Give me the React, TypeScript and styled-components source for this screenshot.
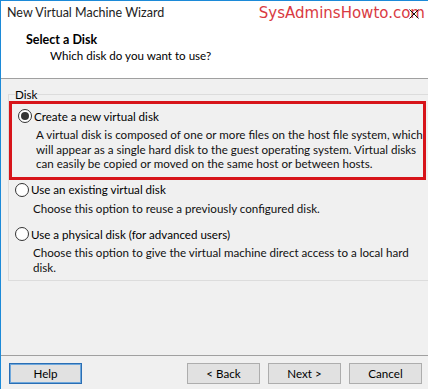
import React from "react";
import styled, { createGlobalStyle } from "styled-components";

const Global = createGlobalStyle`
  html, body { margin: 0; padding: 0; background: #f0f0f0; }
  body { font-family: Lato, "Segoe UI", sans-serif; font-size: 11.6px; color: #000; }
  * { box-sizing: border-box; }
`;

const Window = styled.div`
  width: 428px;
  height: 389px;
  display: flex;
  flex-direction: column;
  border-left: 1px solid #1c8ad8;
  border-top: 1px solid #1c8ad8;
  background: #f0f0f0;
  overflow: hidden;
`;

const Header = styled.div`
  height: 78px;
  background: #ffffff;
  border-bottom: 1px solid #a0a0a0;
  display: flex;
  flex-direction: column;
  flex-shrink: 0;
`;

const TitleRow = styled.div`
  height: 23px;
  display: flex;
  align-items: center;
  justify-content: space-between;
  padding-left: 6px;
  position: relative;
`;

const Title = styled.span`
  font-size: 12.5px;
  color: #222;
`;

const Watermark = styled.span`
  font-family: "DejaVu Sans", Verdana, sans-serif;
  font-size: 15px;
  color: #d93a42;
  margin-right: 3px;
`;

const CloseGlyph = styled.svg`
  position: absolute;
  right: 9px;
  top: 8px;
`;

const SectionTitle = styled.div`
  font-weight: bold;
  font-size: 12.5px;
  padding-left: 25px;
  margin-top: 8px;
  line-height: 16px;
`;

const SectionSub = styled.div`
  padding-left: 49px;
  line-height: 16px;
`;

const Body = styled.div`
  flex: 1;
  display: flex;
  flex-direction: column;
  padding: 9px 9px 0 7px;
`;

const Group = styled.fieldset`
  margin: 0;
  border: 1px solid #dcdcdc;
  border-radius: 0;
  padding: 0;
  height: 193px;
`;

const Legend = styled.legend`
  padding: 0;
  margin-left: 6px;
  line-height: 13px;
`;

const Highlight = styled.div`
  border: 3px solid #d7141a;
  margin: 0 10px 0 0;
  padding: 4px 0 5px 6px;
`;

const Option = styled.div<{ $top?: number }>`
  display: flex;
  flex-direction: column;
  padding-left: ${(p) => (p.$top !== undefined ? 6 : 0)}px;
  margin-top: ${(p) => p.$top ?? 0}px;
`;

const RadioRow = styled.label`
  display: flex;
  align-items: center;
  gap: 2px;
  height: 16px;
`;

const Radio = styled.span<{ $checked?: boolean }>`
  width: 14px;
  height: 14px;
  border-radius: 50%;
  border: 1px solid #333;
  background: #fff;
  display: inline-flex;
  align-items: center;
  justify-content: center;
  &::after {
    content: "";
    width: 8px;
    height: 8px;
    border-radius: 50%;
    background: ${(p) => (p.$checked ? "#333" : "transparent")};
  }
`;

const Desc = styled.div`
  padding-left: 18px;
  margin-top: 4px;
  line-height: 14.5px;
  color: #111;
`;

const Line = styled.span`
  display: block;
  white-space: nowrap;
`;

const Footer = styled.div`
  height: 34px;
  border-top: 1px solid #a0a0a0;
  display: flex;
  align-items: flex-start;
  padding: 7px 6px 0 8px;
  flex-shrink: 0;
`;

const Button = styled.button<{ $focus?: boolean; $gapLeft?: number }>`
  width: 73px;
  height: 21px;
  margin-left: ${(p) => p.$gapLeft ?? 0}px;
  font-family: inherit;
  font-size: 11.6px;
  color: #000;
  background: #e1e1e1;
  border: 1px solid ${(p) => (p.$focus ? "#2a6eb4" : "#adadad")};
  box-shadow: ${(p) => (p.$focus ? "inset 0 0 0 1px #6fa8dc" : "none")};
  padding: 0;
`;

export default function App() {
  return (
    <>
      <Global />
      <Window>
        <Header>
          <TitleRow>
            <Title>New Virtual Machine Wizard</Title>
            <Watermark>SysAdminsHowto.com</Watermark>
            <CloseGlyph width="10" height="10" viewBox="0 0 10 10">
              <path d="M0.5 0.5 L9.5 9.5 M9.5 0.5 L0.5 9.5" stroke="#111" strokeWidth="1" />
            </CloseGlyph>
          </TitleRow>
          <SectionTitle>Select a Disk</SectionTitle>
          <SectionSub>Which disk do you want to use?</SectionSub>
        </Header>
        <Body>
          <Group>
            <Legend>Disk</Legend>
            <Highlight>
              <Option>
                <RadioRow>
                  <Radio $checked />
                  Create a new virtual disk
                </RadioRow>
                <Desc>
                  <Line>A virtual disk is composed of one or more files on the host file system, which</Line>
                  <Line>will appear as a single hard disk to the guest operating system. Virtual disks</Line>
                  <Line>can easily be copied or moved on the same host or between hosts.</Line>
                </Desc>
              </Option>
            </Highlight>
            <Option $top={2}>
              <RadioRow>
                <Radio />
                Use an existing virtual disk
              </RadioRow>
              <Desc>
                <Line>Choose this option to reuse a previously configured disk.</Line>
              </Desc>
            </Option>
            <Option $top={10}>
              <RadioRow>
                <Radio />
                Use a physical disk (for advanced users)
              </RadioRow>
              <Desc>
                <Line>Choose this option to give the virtual machine direct access to a local hard</Line>
                <Line>disk.</Line>
              </Desc>
            </Option>
          </Group>
        </Body>
        <Footer>
          <Button $focus>Help</Button>
          <Button $gapLeft={105}>&lt; Back</Button>
          <Button $gapLeft={8}>Next &gt;</Button>
          <Button $gapLeft={8}>Cancel</Button>
        </Footer>
      </Window>
    </>
  );
}
